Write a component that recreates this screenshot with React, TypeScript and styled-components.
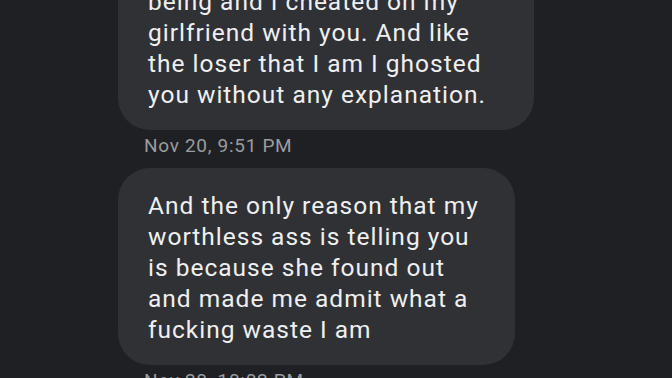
import React from 'react';
import styled, { createGlobalStyle } from 'styled-components';

type Message = {
  lines: string[];
  time: string;
  width: number;
};

const messages: Message[] = [
  {
    lines: [
      'being and I cheated on my',
      'girlfriend with you. And like',
      'the loser that I am I ghosted',
      'you without any explanation.',
    ],
    time: 'Nov 20, 9:51 PM',
    width: 416,
  },
  {
    lines: [
      'And the only reason that my',
      'worthless ass is telling you',
      'is because she found out',
      'and made me admit what a',
      'fucking waste I am',
    ],
    time: 'Nov 20, 10:02 PM',
    width: 397,
  },
];

export default function App() {
  return (
    <>
      <GlobalStyle />
      <Screen>
        <Thread>
          {messages.map((m, i) => (
            <Group key={i}>
              <Bubble $width={m.width}>
                {m.lines.map((line, j) => (
                  <Line key={j}>{line}</Line>
                ))}
              </Bubble>
              <Timestamp>{m.time}</Timestamp>
            </Group>
          ))}
        </Thread>
      </Screen>
    </>
  );
}

const GlobalStyle = createGlobalStyle`
  html, body {
    margin: 0;
    padding: 0;
    background-color: #1f2023;
    overflow: hidden;
  }
`;

const Screen = styled.div`
  width: 672px;
  height: 378px;
  overflow: hidden;
  background-color: #1f2023;
  font-family: Roboto, 'Noto Sans', sans-serif;
`;

// scrolled conversation: first bubble starts above the viewport
const Thread = styled.div`
  display: flex;
  flex-direction: column;
  gap: 11px;
  margin-top: -36px;
  padding-left: 118px;
`;

const Group = styled.div`
  display: flex;
  flex-direction: column;
  align-items: flex-start;
  gap: 5px;
`;

const Bubble = styled.div<{ $width: number }>`
  box-sizing: border-box;
  width: ${(p) => p.$width}px;
  padding: 22px 20px 20px 30px;
  background-color: #303134;
  border-radius: 32px;
  color: #eeeff1;
  font-size: 24.5px;
  line-height: 31px;
  letter-spacing: 1px;
`;

const Line = styled.div`
  white-space: nowrap;
`;

const Timestamp = styled.div`
  margin-left: 26px;
  font-size: 19px;
  line-height: 22px;
  letter-spacing: 0.7px;
  color: #9a9ca0;
`;
